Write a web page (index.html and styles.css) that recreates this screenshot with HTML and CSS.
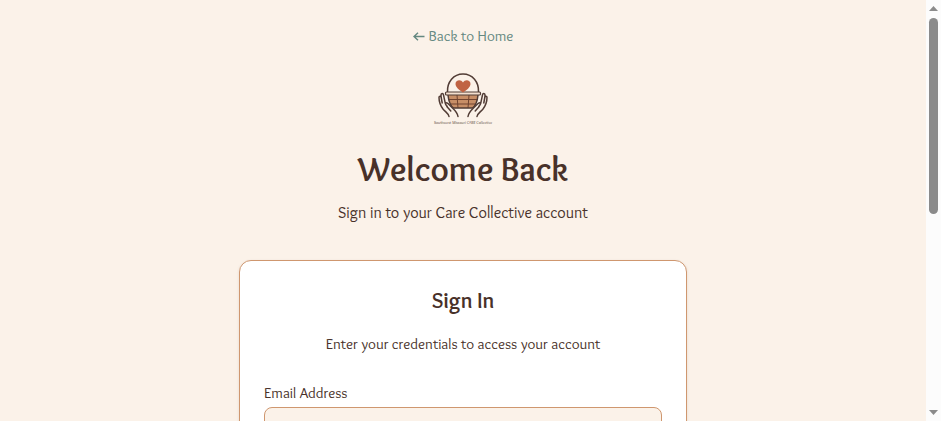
FILE: index.html
```html
<!DOCTYPE html>
<html lang="en">
<head>
<meta charset="utf-8">
<meta name="viewport" content="width=device-width, initial-scale=1">
<title>Sign In - Care Collective</title>
<link rel="stylesheet" href="styles.css">
</head>
<body>
<main class="page">
  <header class="intro">
    <a class="back" href="#">
      <svg class="back-arrow" viewBox="0 0 12 12" aria-hidden="true"><path d="M11.500 6.500H1M5 2.700L1 6.500l4 3.800"/></svg>
      Back to Home
    </a>
    <svg class="logo" viewBox="0 0 64 64" role="img" aria-label="Care Collective">
      <path class="basket" d="M17 31h30c-.7 7-2.700 11-5.500 13H22.500c-2.800-2-4.800-6-5.500-13z"/>
      <path class="weave" d="M18 35.500h28M19.500 40h25M26 31l1 13M38 31l-1 13"/>
      <path class="line" d="M17 31c.7 7 2.700 11 5.500 13h19c2.800-2 4.800-6 5.500-13"/>
      <path class="line" d="M16.500 28C16 18 22.500 10 32 10s16 8 15.500 18"/>
      <rect class="rim" x="14.500" y="28" width="35" height="3" rx="1"/>
      <path class="heart" d="M32 28.500c-4-2.500-7.500-5.500-7.500-8.500 0-4.200 5.500-5 7.500-1.500 2-3.500 7.500-2.700 7.500 1.500 0 3-3.500 6-7.500 8.500z"/>
      <path class="hand" d="M18 52.500c-.5-3-3.500-4.500-6-7.500C9 41 8 37.500 8 33.500c0-1.800 2-1.800 2.200 0l1 5.500M10.200 34l-.2-3c0-1.800 2.200-2 2.500-.2l1.800 8.500c.3 1.500 1 2.200 2 3.200M14.500 39.500c1-1 2-.8 3 .5l4.500 4.500c3 2.800 4.500 4.500 5 8M15.800 42.500l4 4.500"/>
      <path class="hand" transform="translate(64 0) scale(-1 1)" d="M18 52.500c-.5-3-3.500-4.500-6-7.500C9 41 8 37.500 8 33.500c0-1.800 2-1.800 2.200 0l1 5.500M10.200 34l-.2-3c0-1.800 2.200-2 2.500-.2l1.800 8.500c.3 1.500 1 2.200 2 3.200M14.500 39.500c1-1 2-.8 3 .5l4.500 4.500c3 2.800 4.500 4.500 5 8M15.800 42.500l4 4.500"/>
      <text class="logo-name" x="32" y="60" text-anchor="middle">Southwest Missouri CARE Collective</text>
    </svg>
    <h1>Welcome Back</h1>
    <p class="lead">Sign in to your Care Collective account</p>
  </header>
  <section class="card">
    <h2>Sign In</h2>
    <p class="hint">Enter your credentials to access your account</p>
    <form>
      <label for="email">Email Address</label>
      <input id="email" type="email" autocomplete="email">
    </form>
  </section>
</main>
<div class="scrollbar" aria-hidden="true">
  <svg class="step" viewBox="0 0 9 5"><path d="M4.500 0L9 5H0z"/></svg>
  <div class="track"><div class="thumb"></div></div>
  <svg class="step" viewBox="0 0 9 5"><path d="M0 0h9L4.500 5z"/></svg>
</div>
</body>
</html>
```
FILE: styles.css
```css
* {
  box-sizing: border-box;
}

body {
  margin: 0;
  height: 100vh;
  display: flex;
  overflow: hidden;
  background: #fbf2e9;
  color: #483129;
  font-family: Overlock, Lato, "Open Sans", sans-serif;
}

h1,
h2,
p {
  margin: 0;
}

.page {
  flex: 1;
  min-width: 0;
  padding: 24px 16px 0;
  overflow: hidden;
}

.intro {
  display: flex;
  flex-direction: column;
  align-items: center;
  text-align: center;
}

.back {
  display: flex;
  align-items: center;
  gap: 4px;
  color: #648880;
  font-size: 15px;
  line-height: 24px;
  text-decoration: none;
}

.back-arrow {
  width: 12px;
  height: 12px;
  fill: none;
  stroke: currentColor;
  stroke-width: 1.4;
}

.logo {
  width: 64px;
  height: 64px;
  margin: 16px 0;
}

.basket {
  fill: #c78e66;
}

.weave {
  fill: none;
  stroke: #70432f;
  stroke-width: 1;
}

.line,
.hand {
  fill: none;
  stroke: #513c35;
  stroke-width: 1.5;
  stroke-linecap: round;
  stroke-linejoin: round;
}

.rim {
  fill: #f3dfce;
  stroke: #513c35;
  stroke-width: 1.2;
}

.heart {
  fill: #c06343;
}

.logo-name {
  fill: #513c35;
  font-size: 4px;
}

h1 {
  font-size: 34px;
  font-weight: 700;
  line-height: 50px;
}

.lead {
  margin: 7px 0 35px;
  font-size: 16px;
  line-height: 24px;
}

.card {
  max-width: 448px;
  margin: 0 auto;
  padding: 24px;
  background: #fff;
  border: 1px solid #cf976f;
  border-radius: 12px;
  box-shadow: 0 1px 3px rgb(72 49 41 / 12%);
}

h2 {
  font-size: 22px;
  font-weight: 700;
  line-height: 32px;
  text-align: center;
}

.hint {
  margin: 15px 0 27px;
  font-size: 15px;
  line-height: 24px;
  text-align: center;
}

label {
  display: block;
  margin-bottom: 4px;
  font-size: 15px;
  line-height: 20px;
}

input {
  display: block;
  width: 100%;
  height: 44px;
  padding: 8px 12px;
  background: #fbf2e9;
  border: 1px solid #cf976f;
  border-radius: 8px;
  color: inherit;
  font: inherit;
}

.scrollbar {
  flex: none;
  width: 15px;
  padding: 6px 3px;
  display: flex;
  flex-direction: column;
  align-items: center;
  gap: 7px;
  background: #fcfcfc;
}

.step {
  width: 9px;
  height: 5px;
  fill: #8b8b8b;
}

.track {
  flex: 1;
  width: 9px;
}

.thumb {
  height: 51%;
  border-radius: 5px;
  background: #8b8b8b;
}
```
